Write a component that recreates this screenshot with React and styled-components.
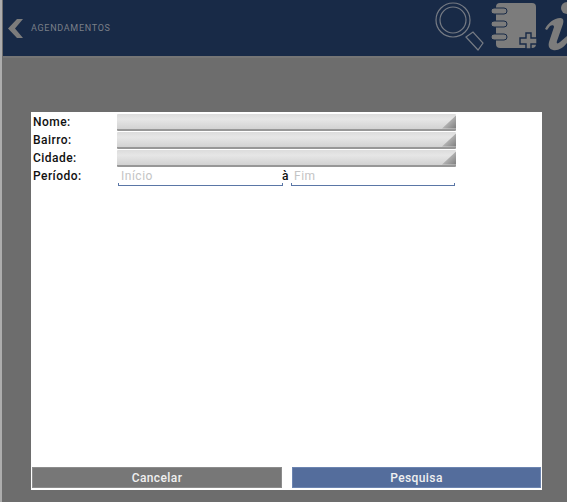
import React from 'react';
import styled, { createGlobalStyle } from 'styled-components';

const GlobalStyle = createGlobalStyle`
  html, body {
    margin: 0;
    padding: 0;
    background: #6d6d6d;
  }
  body {
    font-family: Roboto, "Liberation Sans", sans-serif;
  }
`;

const Page = styled.div`
  width: 567px;
  height: 502px;
  overflow: hidden;
  padding-left: 1px;
  box-sizing: border-box;
  background: #6d6d6d;
  border-left: 2px solid #adadad;
  display: flex;
  flex-direction: column;
`;

const Header = styled.header`
  height: 56px;
  flex: none;
  background: #182a47;
  border-bottom: 2px solid #757575;
  display: flex;
  align-items: center;
`;

const Back = styled.div`
  display: flex;
  align-items: center;
  gap: 8px;
  padding-left: 5px;
  flex: 1;
`;

const BackTitle = styled.span`
  font-size: 9px;
  letter-spacing: 0.7px;
  color: #7a7f88;
`;

const Icons = styled.div`
  display: flex;
  align-self: flex-start;
`;

const Content = styled.main`
  flex: 1;
  padding: 54px 25px 12px 28px;
  display: flex;
`;

const Panel = styled.section`
  flex: 1;
  background: #fff;
  display: flex;
  flex-direction: column;
  padding: 1px 1px 2px 1px;
`;

const Form = styled.div`
  flex: 1;
  display: flex;
  flex-direction: column;
  padding-left: 1px;
`;

const Row = styled.div`
  display: flex;
  align-items: center;
  height: 18px;
`;

const DateRow = styled.div`
  display: flex;
  align-items: flex-start;
  padding-top: 3px;
`;

const Label = styled.label`
  width: 84px;
  flex: none;
  font-size: 12px;
  line-height: 13px;
  font-weight: 500;
  letter-spacing: 0.45px;
  color: #111;
`;

const Select = styled.div`
  position: relative;
  width: 339px;
  height: 17px;
  box-sizing: border-box;
  background: linear-gradient(#dcdcdc, #e6e6e6 35%, #d2d2d2);
  border-bottom: 2px solid #979797;
  border-radius: 1px;
`;

const Corner = styled.div`
  position: absolute;
  right: 0;
  bottom: 0;
  width: 14px;
  height: 13px;
  background: linear-gradient(135deg, #e0e0e0, #7d7d7d);
  clip-path: polygon(100% 0, 100% 100%, 0 100%);
`;

const DateInput = styled.div`
  box-sizing: border-box;
  width: ${(p) => p.$width}px;
  height: 16px;
  margin-left: ${(p) => p.$left}px;
  padding-left: ${(p) => p.$pad}px;
  font-size: 12px;
  letter-spacing: 0.5px;
  line-height: 13px;
  color: #c4c4c4;
  border-bottom: 1px solid #5a76a6;
  position: relative;
  &::before,
  &::after {
    content: '';
    position: absolute;
    bottom: 0;
    width: 1px;
    height: 2px;
    background: #5a76a6;
  }
  &::before {
    left: 0;
  }
  &::after {
    right: 0;
  }
`;

const To = styled.span`
  width: 9px;
  margin-left: -1px;
  font-size: 12px;
  font-weight: 500;
  line-height: 13px;
  color: #111;
  text-align: left;
`;

const Buttons = styled.div`
  display: flex;
  justify-content: space-between;
  height: 21px;
`;

const Button = styled.button`
  width: ${(p) => p.$width}px;
  border: 0;
  padding: 0;
  font-family: inherit;
  font-size: 12px;
  font-weight: 500;
  letter-spacing: 0.4px;
  color: #f0f0f0;
  background: ${(p) => p.$bg};
  box-shadow: inset 0 0 0 1px ${(p) => p.$edge};
`;

const SearchIcon = () => (
  <svg width="54" height="56" viewBox="0 0 54 56" fill="none" stroke="#767b84" strokeWidth="1.2">
    <circle cx="19" cy="20" r="17" />
    <circle cx="19" cy="20" r="13" />
    <path d="M32 37 L39 32 L49 43 L44 50 Z" fill="#182a47" />
  </svg>
);

const NotebookIcon = () => (
  <svg width="52" height="56" viewBox="0 0 52 56" fill="#7c7c7c">
    <rect x="8" y="3" width="40" height="45" rx="4" />
    <g stroke="#182a47" strokeWidth="1">
      <rect x="3" y="8" width="16" height="6" rx="3" />
      <rect x="3" y="21" width="16" height="6" rx="3" />
      <rect x="3" y="34" width="16" height="6" rx="3" />
    </g>
    <path
      d="M38 33 h5 v5 h6 v6 h-6 v5 h-5 v-5 h-6 v-6 h6 z"
      stroke="#182a47"
      strokeWidth="1.4"
    />
  </svg>
);

const InfoIcon = () => (
  <svg width="27" height="56" viewBox="0 0 27 56" fill="#7c7c7c">
    <circle cx="27" cy="8" r="6" />
    <path d="M5 29 C8 23 14 18 20 18 C23 18 24 20 23 24 L17 41 C16 44 18 44 20 42 L27 36 V43 C23 48 18 51 13 50 C9 49 8 46 9 42 L14 27 C14 25 12 25 10 26 L7 30 Z" />
  </svg>
);

const BackIcon = () => (
  <svg width="15" height="19" viewBox="0 0 15 19" fill="#7c7c7c">
    <path d="M9 0 H15 L7 9.5 L15 19 H9 L0 9.5 Z" />
  </svg>
);

const fields = ['Nome:', 'Bairro:', 'Cidade:'];

const App = () => (
  <>
    <GlobalStyle />
    <Page>
      <Header>
        <Back>
          <BackIcon />
          <BackTitle>AGENDAMENTOS</BackTitle>
        </Back>
        <Icons>
          <SearchIcon />
          <NotebookIcon />
          <InfoIcon />
        </Icons>
      </Header>
      <Content>
        <Panel>
          <Form>
            {fields.map((field) => (
              <Row key={field}>
                <Label>{field}</Label>
                <Select>
                  <Corner />
                </Select>
              </Row>
            ))}
            <DateRow>
              <Label>Período:</Label>
              <DateInput $width={165} $left={1} $pad={3}>Início</DateInput>
              <To>à</To>
              <DateInput $width={164} $left={0} $pad={3}>Fim</DateInput>
            </DateRow>
          </Form>
          <Buttons>
            <Button $width={250} $bg="#777777" $edge="#8c8c8c">Cancelar</Button>
            <Button $width={249} $bg="#546d9c" $edge="#6c84b0">Pesquisa</Button>
          </Buttons>
        </Panel>
      </Content>
    </Page>
  </>
);

export default App;
